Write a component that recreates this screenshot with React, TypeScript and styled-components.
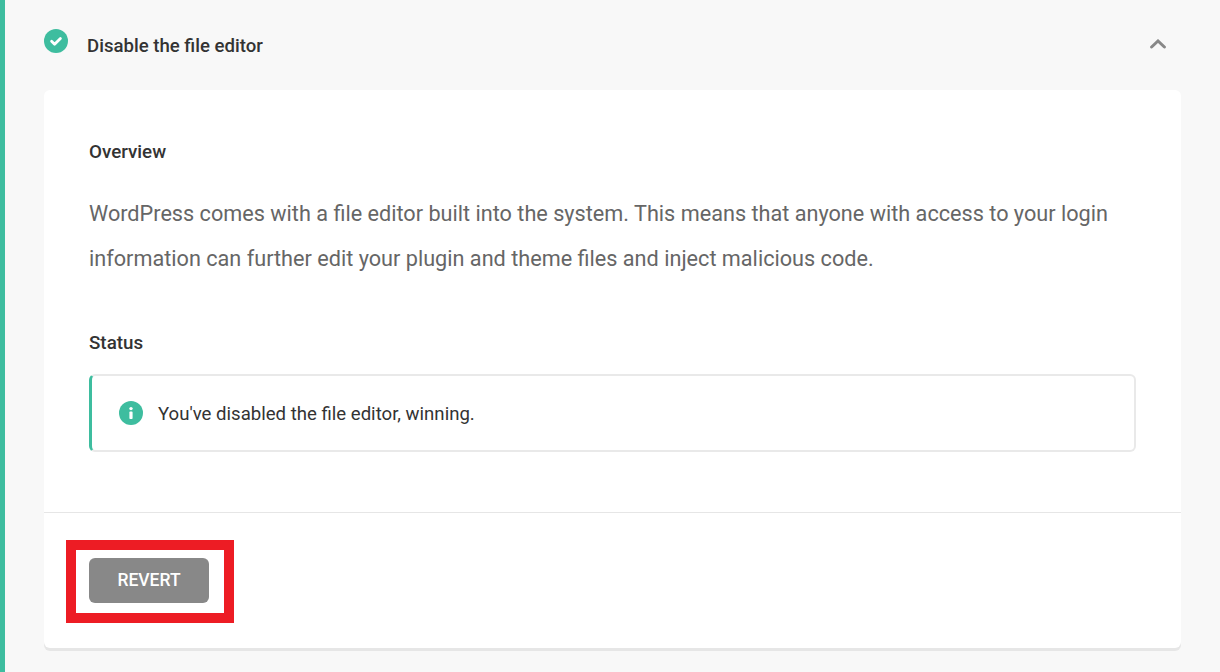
import React from 'react'

import styled, { createGlobalStyle } from 'styled-components'

const GlobalStyle = createGlobalStyle`
  html, body {
    margin: 0;
    padding: 0;
    height: 100%;
    background: #f8f8f8;
    font-family: Roboto, "Liberation Sans", sans-serif;
    overflow: hidden;
  }
`

const CheckIcon = () => (
  <svg width={24} height={24} viewBox="0 0 24 24">
    <circle cx={12} cy={12} r={12} fill="#3ebd9f" />
    <path d="M7.6 12.2l3 3 5.8-5.8" fill="none" stroke="#fff" strokeWidth={2.8} strokeLinecap="round" strokeLinejoin="round" />
  </svg>
)

const ChevronIcon = () => (
  <svg width={16} height={10} viewBox="0 0 16 10">
    <path d="M1.6 8L8 2 14.4 8" fill="none" stroke="#888" strokeWidth={3} strokeLinecap="round" strokeLinejoin="miter" />
  </svg>
)

const InfoIcon = () => (
  <svg width={24} height={24} viewBox="0 0 24 24">
    <circle cx={12} cy={12} r={12} fill="#3ebd9f" />
    <circle cx={12} cy={7.6} r={1.7} fill="#fff" />
    <rect x={10.4} y={10.6} width={3.2} height={7.4} rx={0.8} fill="#fff" />
  </svg>
)

export default function App() {
  return (
    <Page>
      <GlobalStyle />
      <Row>
        <RowTitle>
          <CheckIcon />
          <Title>Disable the file editor</Title>
        </RowTitle>
        <ChevronSlot>
          <ChevronIcon />
        </ChevronSlot>
      </Row>

      <Card>
        <CardBody>
          <Label>Overview</Label>
          <Description>
            WordPress comes with a file editor built into the system. This means that anyone with access to your login
            information can further edit your plugin and theme files and inject malicious code.
          </Description>
          <StatusLabel>Status</StatusLabel>
          <Notice>
            <InfoIcon />
            <NoticeText>You've disabled the file editor, winning.</NoticeText>
          </Notice>
        </CardBody>

        <CardFooter>
          <ButtonHighlight>
            <RevertButton type={'button'}>REVERT</RevertButton>
          </ButtonHighlight>
        </CardFooter>
      </Card>
    </Page>
  )
}

const Page = styled.div`
  box-sizing: border-box;
  width: 1220px;
  height: 672px;
  overflow: hidden;
  padding: 0 39px;
  background: #f8f8f8;
  border-left: 5px solid #3ebd9f;
`

const Row = styled.div`
  box-sizing: border-box;
  display: flex;
  align-items: flex-start;
  justify-content: space-between;
  height: 90px;
  padding: 29px 15px 0 0;
`

const RowTitle = styled.div`
  display: flex;
  align-items: flex-start;
  gap: 19px;
`

const Title = styled.span`
  margin-top: 3px;
  font-weight: 500;
  font-size: 18.6px;
  line-height: 28px;
  color: #333333;
`

const ChevronSlot = styled.div`
  display: flex;
  margin-top: 10px;
`

const Card = styled.div`
  background: #ffffff;
  border-radius: 6px;
  box-shadow: 0 3px 0 #e6e6e6;
`

const CardBody = styled.div`
  padding: 48px 45px 60px;
  border-bottom: 1px solid #e6e6e6;
`

const Label = styled.div`
  font-weight: 500;
  font-size: 18.8px;
  line-height: 28px;
  color: #333333;
`

const StatusLabel = styled(Label)`
  margin-top: 48px;
`

const Description = styled.p`
  margin: 25px 0 0;
  font-weight: 400;
  font-size: 21.66px;
  line-height: 45px;
  color: #666666;
`

const Notice = styled.div`
  box-sizing: border-box;
  display: flex;
  align-items: center;
  gap: 15px;
  height: 78px;
  margin-top: 17px;
  padding-left: 27px;
  background: #ffffff;
  border: 2px solid #e9e9e9;
  border-left: 3px solid #3ebd9f;
  border-radius: 6px;
`

const NoticeText = styled.span`
  margin-top: 2px;
  font-size: 18.6px;
  line-height: 28px;
  color: #333333;
`

const CardFooter = styled.div`
  display: flex;
  padding: 45px;
`

const ButtonHighlight = styled.div`
  position: relative;
  display: flex;

  &::after {
    content: '';
    position: absolute;
    left: -23px;
    top: -18px;
    right: -25px;
    bottom: -20px;
    border: 10px solid #ed1c24;
    pointer-events: none;
  }
`

const RevertButton = styled.button`
  width: 120px;
  height: 45px;
  padding: 0 0 2px;
  border: none;
  border-radius: 6px;
  background: #888888;
  color: #ffffff;
  font-family: Roboto, "Liberation Sans", sans-serif;
  font-weight: 500;
  font-size: 17.5px;
`
